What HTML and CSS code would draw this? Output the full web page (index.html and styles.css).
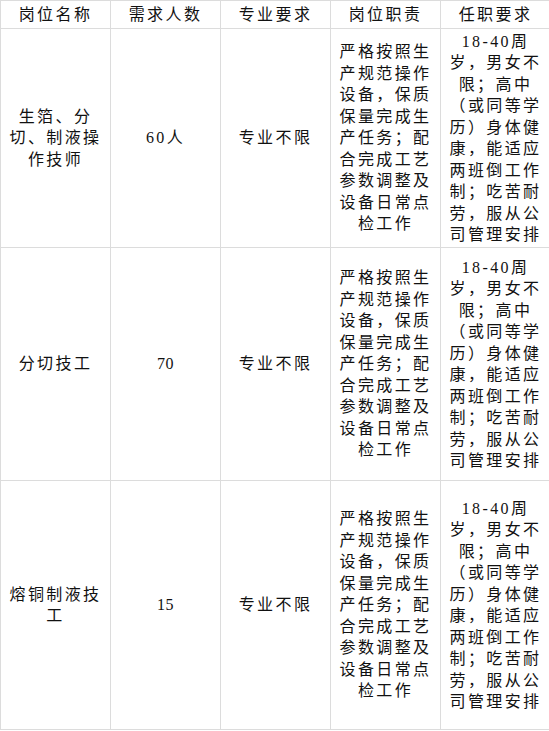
FILE: index.html
```html
<!DOCTYPE html>
<html lang="zh-CN">
<head>
<meta charset="utf-8">
<title>岗位需求</title>
<link rel="stylesheet" href="styles.css">
</head>
<body>
<table class="jobs">
  <colgroup>
    <col class="c"><col class="c"><col class="c"><col class="c"><col class="c">
  </colgroup>
  <thead>
    <tr class="row-head">
      <th>岗位名称</th><th>需求人数</th><th>专业要求</th><th>岗位职责</th><th>任职要求</th>
    </tr>
  </thead>
  <tbody>
    <tr class="row-1">
      <td>生箔、分<br>切、制液操<br>作技师</td>
      <td>60人</td>
      <td>专业不限</td>
      <td>严格按照生<br>产规范操作<br>设备，保质<br>保量完成生<br>产任务；配<br>合完成工艺<br>参数调整及<br>设备日常点<br>检工作</td>
      <td>18-40周<br>岁，男女不<br>限；高中<br>（或同等学<br>历）身体健<br>康，能适应<br>两班倒工作<br>制；吃苦耐<br>劳，服从公<br>司管理安排</td>
    </tr>
    <tr class="row-2">
      <td>分切技工</td>
      <td class="num">70</td>
      <td>专业不限</td>
      <td>严格按照生<br>产规范操作<br>设备，保质<br>保量完成生<br>产任务；配<br>合完成工艺<br>参数调整及<br>设备日常点<br>检工作</td>
      <td>18-40周<br>岁，男女不<br>限；高中<br>（或同等学<br>历）身体健<br>康，能适应<br>两班倒工作<br>制；吃苦耐<br>劳，服从公<br>司管理安排</td>
    </tr>
    <tr class="row-3">
      <td>熔铜制液技<br>工</td>
      <td class="num">15</td>
      <td>专业不限</td>
      <td>严格按照生<br>产规范操作<br>设备，保质<br>保量完成生<br>产任务；配<br>合完成工艺<br>参数调整及<br>设备日常点<br>检工作</td>
      <td>18-40周<br>岁，男女不<br>限；高中<br>（或同等学<br>历）身体健<br>康，能适应<br>两班倒工作<br>制；吃苦耐<br>劳，服从公<br>司管理安排</td>
    </tr>
  </tbody>
</table>
</body>
</html>
```
FILE: styles.css
```css
html, body {
  margin: 0;
  padding: 0;
  background: #fff;
  overflow: hidden;
}
body {
  font-family: "Liberation Serif", "Noto Sans CJK SC", serif;
  font-size: 16px;
  color: #111;
}
.jobs {
  border-collapse: collapse;
  table-layout: fixed;
  width: 551px;
}
.jobs .c {
  width: 110px;
}
.jobs th,
.jobs td {
  border: 1px solid #dcdcdc;
  padding: 0;
  text-align: center;
  vertical-align: middle;
  white-space: nowrap;
  letter-spacing: 2.4px;
  line-height: 21.5px;
  font-weight: normal;
}
.jobs td.num {
  letter-spacing: 0.4px;
}
.row-head th {
  height: 27px;
}
.row-1 td {
  height: 218px;
}
.row-2 td {
  height: 232px;
}
.row-3 td {
  height: 248px;
}
```
